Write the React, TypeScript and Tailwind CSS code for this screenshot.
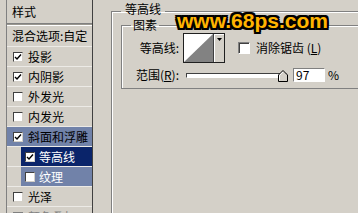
import React from "react";

type Row = {
  label: string;
  checked?: boolean;
  tone?: "soft" | "active";
  nested?: boolean;
  disabled?: boolean;
};

const rows: Row[] = [
  { label: "投影", checked: true },
  { label: "内阴影", checked: true },
  { label: "外发光" },
  { label: "内发光" },
  { label: "斜面和浮雕", checked: true, tone: "soft" },
  { label: "等高线", checked: true, tone: "active", nested: true },
  { label: "纹理", tone: "soft", nested: true },
  { label: "光泽" },
  { label: "颜色叠加", disabled: true },
];

function Check({ checked, big, disabled }: { checked?: boolean; big?: boolean; disabled?: boolean }) {
  return (
    <span
      className={
        big
          ? "flex h-[12px] w-[12px] shrink-0 items-center justify-center border border-t-[#808080] border-l-[#808080] border-b-white border-r-white bg-white shadow-[inset_1px_1px_0_#404040]"
          : disabled
            ? "flex h-[10px] w-[10px] shrink-0 items-center justify-center border border-[#808080] bg-[#d4d0c8]"
            : "flex h-[10px] w-[10px] shrink-0 items-center justify-center border border-t-[#404040] border-l-[#404040] border-b-[#d4d0c8] border-r-[#d4d0c8] bg-white"
      }
    >
      {checked && (
        <svg width="8" height="8" viewBox="0 0 8 8">
          <path d="M1 4 L3 6 L7 1.5" fill="none" stroke="#000" strokeWidth="1.4" />
        </svg>
      )}
    </span>
  );
}

function ListRow({ row }: { row: Row }) {
  const inner =
    row.tone === "active"
      ? "flex h-full flex-1 items-center gap-[4px] bg-[#0a246a] pl-[4px] text-white"
      : row.tone === "soft"
        ? row.nested
          ? "flex h-full flex-1 items-center gap-[4px] bg-[#7182a9] pl-[4px] text-white"
          : "flex h-full flex-1 items-center gap-[5px] bg-[#7182a9] pl-[6px]"
        : row.disabled
          ? "flex h-full flex-1 items-center gap-[5px] pl-[6px] text-[#808080]"
          : "flex h-full flex-1 items-center gap-[5px] pl-[6px]";
  return (
    <div className={row.nested ? "flex h-[20px] border-b border-[#eceae6] pl-[14px]" : "flex h-[20px] border-b border-[#eceae6]"}>
      <div className={inner}>
        <Check checked={row.checked} disabled={row.disabled} />
        <span className="leading-[12px]">{row.label}</span>
      </div>
    </div>
  );
}

export default function App() {
  return (
    <div className="relative flex h-[213px] w-[358px] overflow-hidden bg-[#d4d0c8] font-['Noto_Sans_CJK_SC',sans-serif] text-[12px] text-black">
      {/* style list */}
      <div className="w-[93px] shrink-0 pl-[6px]">
        <div className="h-[240px] border-x border-l-[#808080] border-r-[#404040]">
          <div className="flex h-[23px] items-center pl-[5px]">样式</div>
          <div className="h-[3px] border-t border-b border-t-[#808080] border-b-white bg-[#9a978f]" />
          <div className="flex h-[21px] items-center border-b border-[#eceae6] pl-[5px]">混合选项:自定</div>
          {rows.map((r) => (
            <ListRow key={r.label} row={r} />
          ))}
        </div>
      </div>

      {/* settings */}
      <div className="flex-1 pl-[18px]">
        <fieldset className="mt-[3px] h-[260px] w-[290px] border border-[#808080] pl-[9px] shadow-[inset_1px_1px_0_#fff]">
          <legend className="px-[4px] pb-[4px] leading-[12px]">等高线</legend>
          <fieldset className="w-[280px] border border-[#808080] pb-[5px] pl-[9px] shadow-[inset_1px_1px_0_#fff]">
            <legend className="px-[2px] leading-[12px]">图素</legend>
            <div className="mt-[2px] grid grid-cols-[48px_auto] items-center gap-x-[4px] gap-y-[4px]">
              <span className="text-right leading-[12px]">等高线:</span>
              <div className="flex items-center">
                <div className="flex h-[30px] w-[42px] border border-[#202020] bg-[#d4d0c8]">
                  <svg width="29" height="28" viewBox="0 0 29 28" className="block">
                    <rect width="29" height="28" fill="#fff" />
                    <path d="M0 28 L29 0 L29 28 Z" fill="#828282" />
                  </svg>
                  <div className="flex flex-1 justify-center border-l border-[#404040] pt-[4px] shadow-[inset_1px_1px_0_#fff]">
                    <svg width="5" height="3" viewBox="0 0 5 3">
                      <path d="M0 0 H5 L2.5 3 Z" fill="#000" />
                    </svg>
                  </div>
                </div>
                <label className="ml-[13px] flex items-center gap-[6px]">
                  <Check big />
                  <span className="leading-[12px]">
                    消除锯齿 (<span className="underline">L</span>)
                  </span>
                </label>
              </div>
              <span className="text-right leading-[12px]">
                范围(<span className="underline">R</span>):
              </span>
              <div className="flex h-[16px] items-center">
                <div className="relative ml-[3px] h-[5px] w-[101px] border border-t-[#404040] border-l-[#404040] border-b-white border-r-white bg-white">
                  <svg width="10" height="12" viewBox="0 0 10 12" className="absolute right-[-2px] top-[-4px]">
                    <path d="M0.5 11.5 V5 L5 0.5 L9.5 5 V11.5 Z" fill="#d4d0c8" stroke="#000" />
                    <path d="M1.5 10.5 V5.4 L5 1.9" fill="none" stroke="#fff" />
                  </svg>
                </div>
                <div className="ml-[6px] flex h-[14px] w-[32px] items-center border border-t-[#808080] border-l-[#808080] border-b-white border-r-white bg-white pl-[2px] leading-[12px]">
                  97
                </div>
                <span className="ml-[3px] leading-[12px]">%</span>
              </div>
            </div>
          </fieldset>
        </fieldset>
      </div>

      {/* watermark */}
      <div className="pointer-events-none absolute left-[177px] top-[10px] font-['Liberation_Sans',sans-serif] text-[21px] leading-[21px] font-bold text-[#ffb400] [text-shadow:-2px_-2px_0_#000,2px_-2px_0_#000,-2px_2px_0_#000,2px_2px_0_#000,0_2px_0_#000,0_-2px_0_#000,2px_0_0_#000,-2px_0_0_#000]">
        www.68ps.com
      </div>
    </div>
  );
}
